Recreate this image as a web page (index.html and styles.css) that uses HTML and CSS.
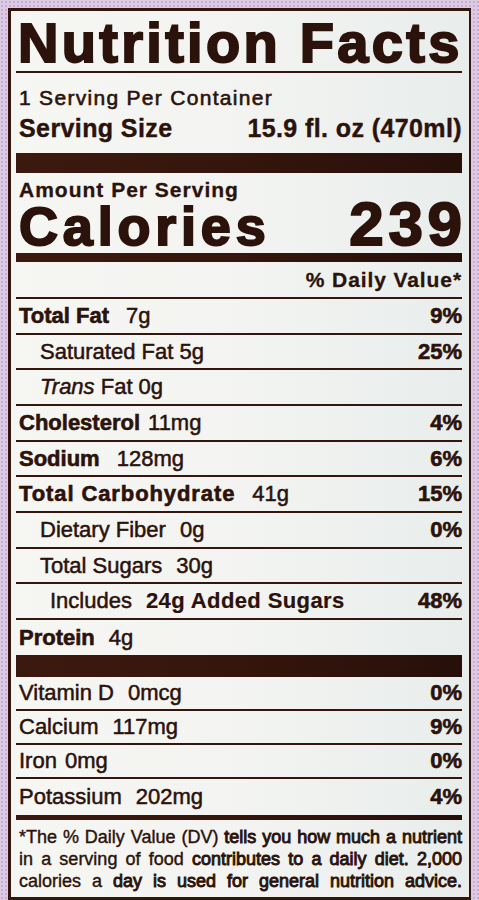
FILE: index.html
```html
<!DOCTYPE html>
<html lang="en">
<head>
<meta charset="utf-8">
<title>Nutrition Facts</title>
<link rel="stylesheet" href="styles.css">
</head>
<body>
<div class="label">
  <h1 class="title">Nutrition Facts</h1>
  <div class="serving">
    <div class="servings">1 Serving Per Container</div>
    <div class="size"><span>Serving Size</span><span>15.9 fl. oz (470ml)</span></div>
  </div>
  <div class="bar bar-thick"></div>
  <div class="amount">Amount Per Serving</div>
  <div class="calories"><span class="cal-label">Calories</span><span class="cal-value">239</span></div>
  <div class="bar bar-medium"></div>
  <div class="dv-head">% Daily Value*</div>

  <div class="row"><span><b>Total Fat</b><span class="amt wide">7g</span></span><b>9%</b></div>
  <div class="row sub"><span>Saturated Fat 5g</span><b>25%</b></div>
  <div class="row sub"><span><i>Trans</i> Fat 0g</span></div>
  <div class="row"><span><b>Cholesterol</b><span class="amt narrow">11mg</span></span><b>4%</b></div>
  <div class="row"><span><b>Sodium</b><span class="amt wide">128mg</span></span><b>6%</b></div>
  <div class="row"><span><b class="carb">Total Carbohydrate</b><span class="amt wide">41g</span></span><b>15%</b></div>
  <div class="row sub"><span>Dietary Fiber<span class="amt">0g</span></span><b>0%</b></div>
  <div class="row sub"><span>Total Sugars<span class="amt">30g</span></span></div>
  <div class="row subsub"><span>Includes<span class="amt added">24g Added Sugars</span></span><b>48%</b></div>
  <div class="row protein"><span><b>Protein</b><span class="amt">4g</span></span></div>
  <div class="bar bar-vit"></div>

  <div class="row vit"><span>Vitamin D<span class="amt">0mcg</span></span><b>0%</b></div>
  <div class="row vit"><span>Calcium<span class="amt">117mg</span></span><b>9%</b></div>
  <div class="row vit"><span>Iron<span class="amt narrow">0mg</span></span><b>0%</b></div>
  <div class="row vit last"><span>Potassium<span class="amt">202mg</span></span><b>4%</b></div>
  <div class="bar bar-foot"></div>

  <div class="foot">
    <div class="foot-line">*The % Daily Value (DV) <span class="ink">tells you how much a nutrient</span></div>
    <div class="foot-line">in a serving of food <span class="ink">contributes to a daily diet. 2,000</span></div>
    <div class="foot-line">calories a <span class="ink">day is used for general nutrition advice.</span></div>
  </div>
</div>
</body>
</html>
```

FILE: styles.css
```css
html, body {
  height: 100%;
}

body {
  margin: 8px;
  background-color: #dccae3;
  background-image: radial-gradient(circle, #c7acd3 0.9px, transparent 1.3px);
  background-size: 4px 4px;
  font-family: "Liberation Sans", Arial, sans-serif;
  color: #2b120a;
}

.label {
  width: 464px;
  box-sizing: border-box;
  border: 3px solid #33160d;
  padding: 0 7px 5px 5px;
  background: linear-gradient(90deg, #f6f6f3 0%, #f3f4f1 50%, #e8edec 100%);
}

.title {
  margin: 0;
  padding: 4px 0 0 2px;
  font-size: 56px;
  line-height: 56px;
  font-weight: 700;
  letter-spacing: 3.3px;
  -webkit-text-stroke: 2px #2b120a;
  border-bottom: 2px solid #33160d;
  white-space: nowrap;
}

.serving {
  padding: 10px 0 0 3px;
  margin-bottom: 9px;
}

.servings {
  font-size: 21px;
  line-height: 30px;
  letter-spacing: 1.3px;
  -webkit-text-stroke: 0.6px #2b120a;
}

.size {
  display: flex;
  justify-content: space-between;
  font-size: 25px;
  line-height: 31px;
  font-weight: 700;
  letter-spacing: 0.4px;
  -webkit-text-stroke: 0.4px #2b120a;
}

.bar {
  background: linear-gradient(90deg, #3c190f 0%, #35150c 50%, #27100a 100%);
}

.bar-thick { height: 20px; }
.bar-medium { height: 9px; }
.bar-vit { height: 22px; }
.bar-foot { height: 5px; }

.amount {
  padding: 5px 0 0 3px;
  font-size: 21px;
  line-height: 24px;
  margin-bottom: 2px;
  font-weight: 700;
  letter-spacing: 1px;
  -webkit-text-stroke: 0.3px #2b120a;
}

.calories {
  display: flex;
  justify-content: space-between;
  align-items: baseline;
  height: 49px;
  padding-left: 3px;
  font-weight: 700;
}

.cal-label {
  font-size: 54px;
  line-height: 40px;
  letter-spacing: 4.8px;
  -webkit-text-stroke: 2px #2b120a;
}

.cal-value {
  font-size: 62px;
  line-height: 40px;
  letter-spacing: 4.6px;
  -webkit-text-stroke: 2px #2b120a;
  margin-right: -4.6px;
}

.dv-head {
  text-align: right;
  font-size: 21px;
  line-height: 35px;
  font-weight: 700;
  letter-spacing: 0.9px;
  -webkit-text-stroke: 0.3px #2b120a;
  border-bottom: 2px solid #33160d;
}

.row {
  display: flex;
  justify-content: space-between;
  height: 33.67px;
  line-height: 33.67px;
  padding-left: 3px;
  font-size: 22px;
  border-bottom: 2px solid #33160d;
  -webkit-text-stroke: 0.5px #2b120a;
  white-space: nowrap;
}

.row b {
  font-weight: 700;
  -webkit-text-stroke: 0.6px #2b120a;
}

.row b.carb {
  letter-spacing: 0.9px;
}

.row .amt {
  margin-left: 14px;
}

.row .amt.wide {
  margin-left: 17px;
}

.row .amt.narrow {
  margin-left: 8px;
}

.row .amt.added {
  font-weight: 700;
  letter-spacing: 0.4px;
  -webkit-text-stroke: 0.2px #2b120a;
}

.row.sub {
  padding-left: 24px;
}

.row.subsub {
  padding-left: 34px;
}

.row.protein {
  height: 35px;
  line-height: 35px;
  border-bottom: none;
}

.row.vit {
  height: 32px;
  line-height: 32px;
}

.row.vit.last {
  height: 36px;
  line-height: 36px;
  border-bottom: none;
}

.foot {
  padding: 6px 0 0 3px;
  font-size: 18px;
  line-height: 22px;
  -webkit-text-stroke: 0.4px #2b120a;
}

.foot-line {
  text-align: justify;
  text-align-last: justify;
  white-space: nowrap;
}

.foot .ink {
  -webkit-text-stroke: 0.9px #2b120a;
}
```
